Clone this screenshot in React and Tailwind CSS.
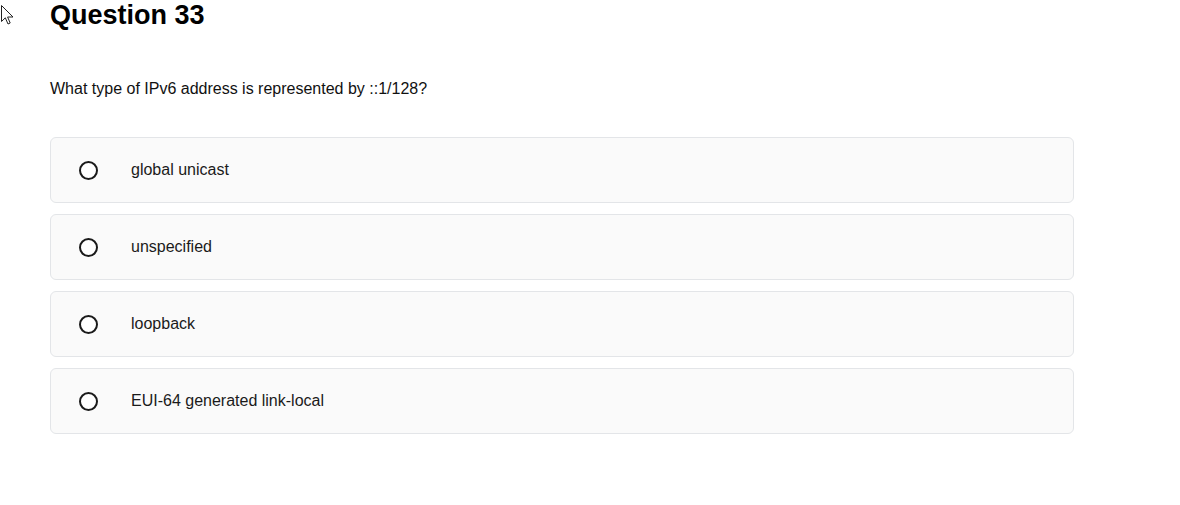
const OPTIONS = ['global unicast', 'unspecified', 'loopback', 'EUI-64 generated link-local'];

function Cursor() {
  return (
    <svg className="absolute left-[1px] top-[5px]" width="14" height="20" viewBox="0 0 14 20">
      <path d="M0.5 0.5 L0.5 16.5 L4.3 12.8 L7 19 L9.2 18 L6.6 12 L12 12 Z" fill="#fff" stroke="#222" strokeWidth="1" strokeLinejoin="round" />
    </svg>
  );
}

export default function App() {
  return (
    <div className="relative min-h-[505px] bg-white pl-[50px] font-['Liberation_Sans',Arial,sans-serif] text-[#111]">
      <Cursor />
      <h1 className="text-[27px] font-bold leading-[30px] text-black">Question 33</h1>
      <p className="mt-[49px] text-[16px] leading-[20px] text-[#111]">What type of IPv6 address is represented by ::1/128?</p>

      <div className="mt-[38px] flex w-[1024px] flex-col gap-[11px]">
        {OPTIONS.map((opt) => (
          <label
            key={opt}
            className="flex h-[66px] items-center rounded-[6px] border border-[#e3e5e8] bg-[#fafafa] pl-[28px]"
          >
            <span className="h-[19px] w-[19px] rounded-full border-2 border-[#1a1a1a] bg-white" />
            <span className="ml-[33px] text-[16px] text-[#1a1a1a]">{opt}</span>
          </label>
        ))}
      </div>
    </div>
  );
}
